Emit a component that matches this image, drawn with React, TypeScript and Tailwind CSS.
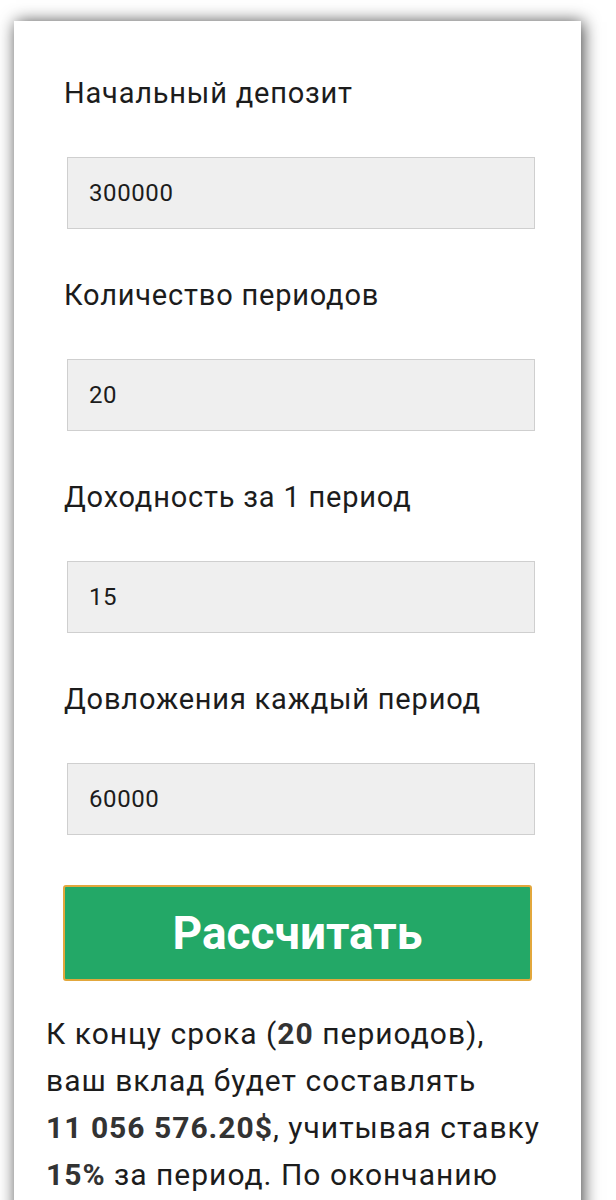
import React from "react";

const fields = [
  { label: "Начальный депозит", value: "300000" },
  { label: "Количество периодов", value: "20" },
  { label: "Доходность за 1 период", value: "15" },
  { label: "Довложения каждый период", value: "60000" },
];

export default function App() {
  return (
    <div className="min-h-[1200px] w-[616px] overflow-hidden bg-white pt-[21px] pl-[14px]" style={{ fontFamily: "Roboto, 'Noto Sans', sans-serif" }}>
      <div className="w-[567px] bg-white pt-[56px] pb-[40px] shadow-[2px_1px_16px_rgba(0,0,0,0.75)]">
        {fields.map((f, i) => (
          <div key={i} className={i === 0 ? "" : "mt-[50px]"}>
            <div className="pl-[50px] text-[29px] leading-[33px] tracking-[0.8px] text-[#1c1c1c]">{f.label}</div>
            <div className="mt-[47px] ml-[53px] flex h-[72px] w-[468px] items-center border border-[#cfcfcf] bg-[#efefef] pl-[21px] text-[24px] leading-[28px] tracking-[0.6px] text-[#1c1c1c]">
              {f.value}
            </div>
          </div>
        ))}
        <button className="mt-[50px] ml-[49px] flex h-[96px] w-[469px] items-center justify-center rounded-[3px] border-2 border-[#e2a73c] bg-[#23a867] text-[46px] font-bold leading-none text-white">
          Рассчитать
        </button>
        <p className="mt-[29px] w-[530px] pl-[32px] text-[30px] leading-[47px] tracking-[1px] text-[#1c1c1c]">
          К концу срока (<b className="font-bold text-[#333]">20</b> периодов), ваш вклад будет составлять{" "}
          <b className="font-bold text-[#333]">11&nbsp;056&nbsp;576.20$</b>, учитывая ставку{" "}
          <b className="font-bold text-[#333]">15%</b> за период. По окончанию
        </p>
      </div>
    </div>
  );
}
